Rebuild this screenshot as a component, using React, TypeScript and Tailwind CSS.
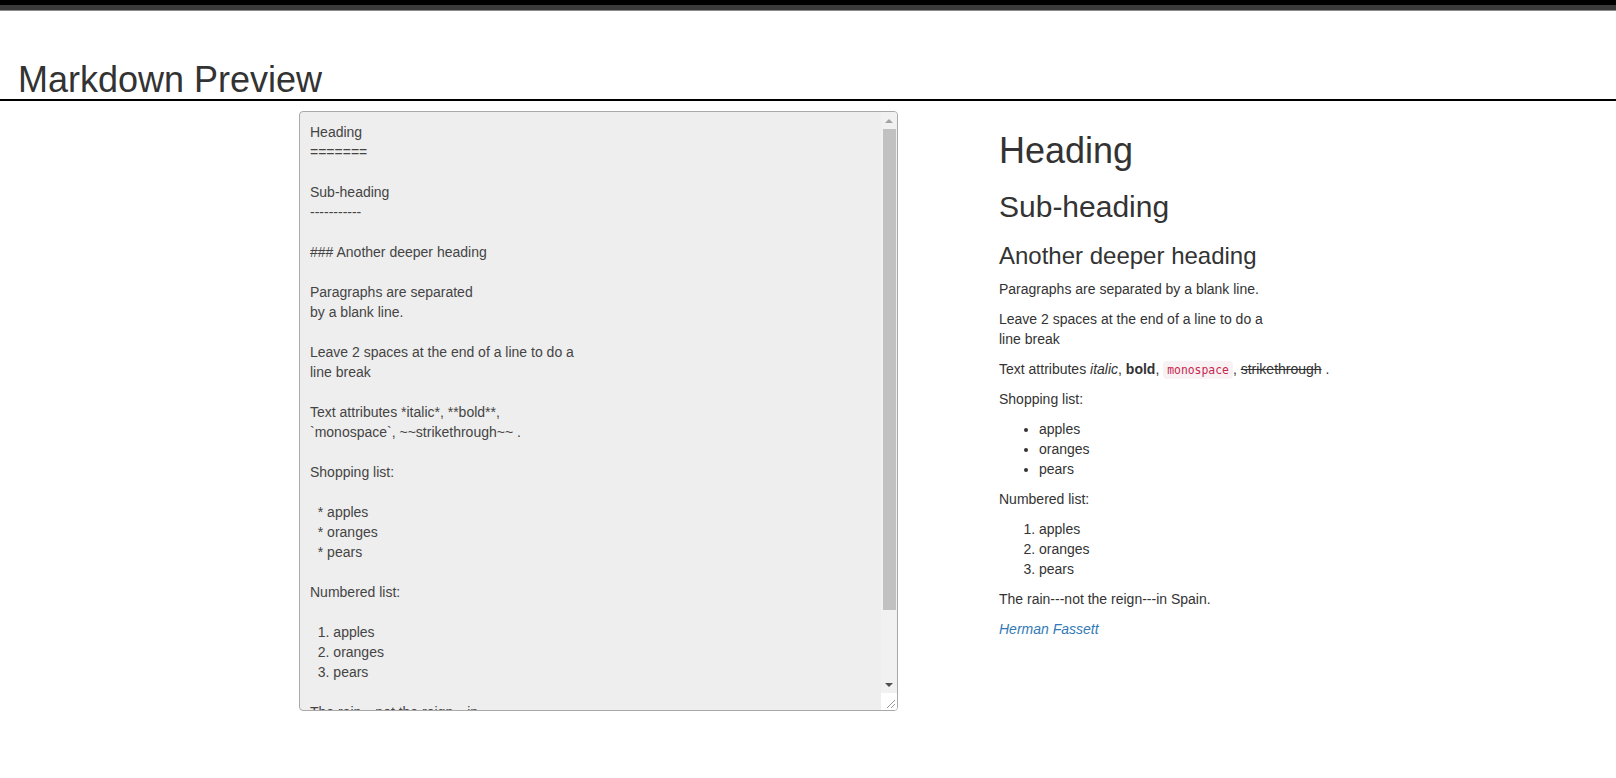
import React from 'react';

const source = `Heading
=======

Sub-heading
-----------

### Another deeper heading

Paragraphs are separated
by a blank line.

Leave 2 spaces at the end of a line to do a
line break

Text attributes *italic*, **bold**,
\`monospace\`, ~~strikethrough~~ .

Shopping list:

  * apples
  * oranges
  * pears

Numbered list:

  1. apples
  2. oranges
  3. pears

The rain---not the reign---in
Spain.

 *[Herman Fassett](https://freecodecamp.com/hermanfassett)*`;

function FakeScrollbar() {
  return (
    <div className="flex w-[16px] shrink-0 flex-col bg-[#f1f1f1]">
      <div className="flex h-[17px] items-center justify-center">
        <div className="h-0 w-0 border-x-[4px] border-b-[4px] border-x-transparent border-b-[#a3a3a3]" />
      </div>
      <div className="ml-[2px] h-[481px] w-[13px] bg-[#c1c1c1]" />
      <div className="flex-1" />
      <div className="flex h-[17px] items-center justify-center">
        <div className="h-0 w-0 border-x-[4px] border-t-[4px] border-x-transparent border-t-[#505050]" />
      </div>
      <div className="h-[17px] bg-white">
        <svg width="16" height="17" viewBox="0 0 16 17">
          <path d="M14 7 L6 15 M14 11 L10 15" stroke="#9a9a9a" strokeWidth="1" />
        </svg>
      </div>
    </div>
  );
}

export default function App() {
  return (
    <div className="min-h-screen bg-white font-['Liberation_Sans',Arial,sans-serif] text-[14px] leading-[20px] text-[#333]">
      {/* top bar */}
      <div className="h-[5px] bg-black" />
      <div className="h-[5px] bg-[#3a3a3a]" />
      <div className="h-[1px] bg-[#8c8c8c]" />

      <header className="border-b-2 border-black pt-[49px]">
        <h1 className="pl-[18px] text-[36px] leading-[39px] font-normal">Markdown Preview</h1>
      </header>

      <main className="mt-[10px] flex items-start pl-[299px]">
        {/* editor */}
        <div className="flex h-[600px] w-[599px] shrink-0 overflow-hidden rounded-[4px] border border-[#a9a9a9] bg-[#eee]">
          <div className="flex-1 overflow-hidden whitespace-pre pl-[10px] pt-[10px] text-[#444]">{source}</div>
          <FakeScrollbar />
        </div>

        {/* preview */}
        <div className="ml-[101px] w-[500px]">
          <h1 className="mt-[20px] mb-[10px] text-[36px] leading-[39.6px] font-normal">Heading</h1>
          <h2 className="mt-[19px] mb-[10px] text-[30px] leading-[33px] font-normal">Sub-heading</h2>
          <h3 className="mt-[20px] mb-[10px] text-[24px] leading-[26.4px] font-normal">Another deeper heading</h3>
          <p className="mb-[10px]">Paragraphs are separated by a blank line.</p>
          <p className="mb-[10px]">
            Leave 2 spaces at the end of a line to do a
            <br />
            line break
          </p>
          <p className="mb-[10px]">
            Text attributes <em>italic</em>, <strong>bold</strong>,{' '}
            <code className="rounded-[4px] bg-[#f9f2f4] px-[4px] py-[2px] font-['DejaVu_Sans_Mono',monospace] text-[11.4px] leading-none text-[#c7254e]">
              monospace
            </code>
            , <del>strikethrough</del> .
          </p>
          <p className="mb-[10px]">Shopping list:</p>
          <ul className="mb-[10px] list-disc pl-[40px]">
            <li>apples</li>
            <li>oranges</li>
            <li>pears</li>
          </ul>
          <p className="mb-[10px]">Numbered list:</p>
          <ol className="mb-[10px] list-decimal pl-[40px]">
            <li>apples</li>
            <li>oranges</li>
            <li>pears</li>
          </ol>
          <p className="mb-[10px]">The rain---not the reign---in Spain.</p>
          <p className="mb-[10px]">
            <em>
              <a href="#" className="text-[#337ab7]">
                Herman Fassett
              </a>
            </em>
          </p>
        </div>
      </main>
    </div>
  );
}
